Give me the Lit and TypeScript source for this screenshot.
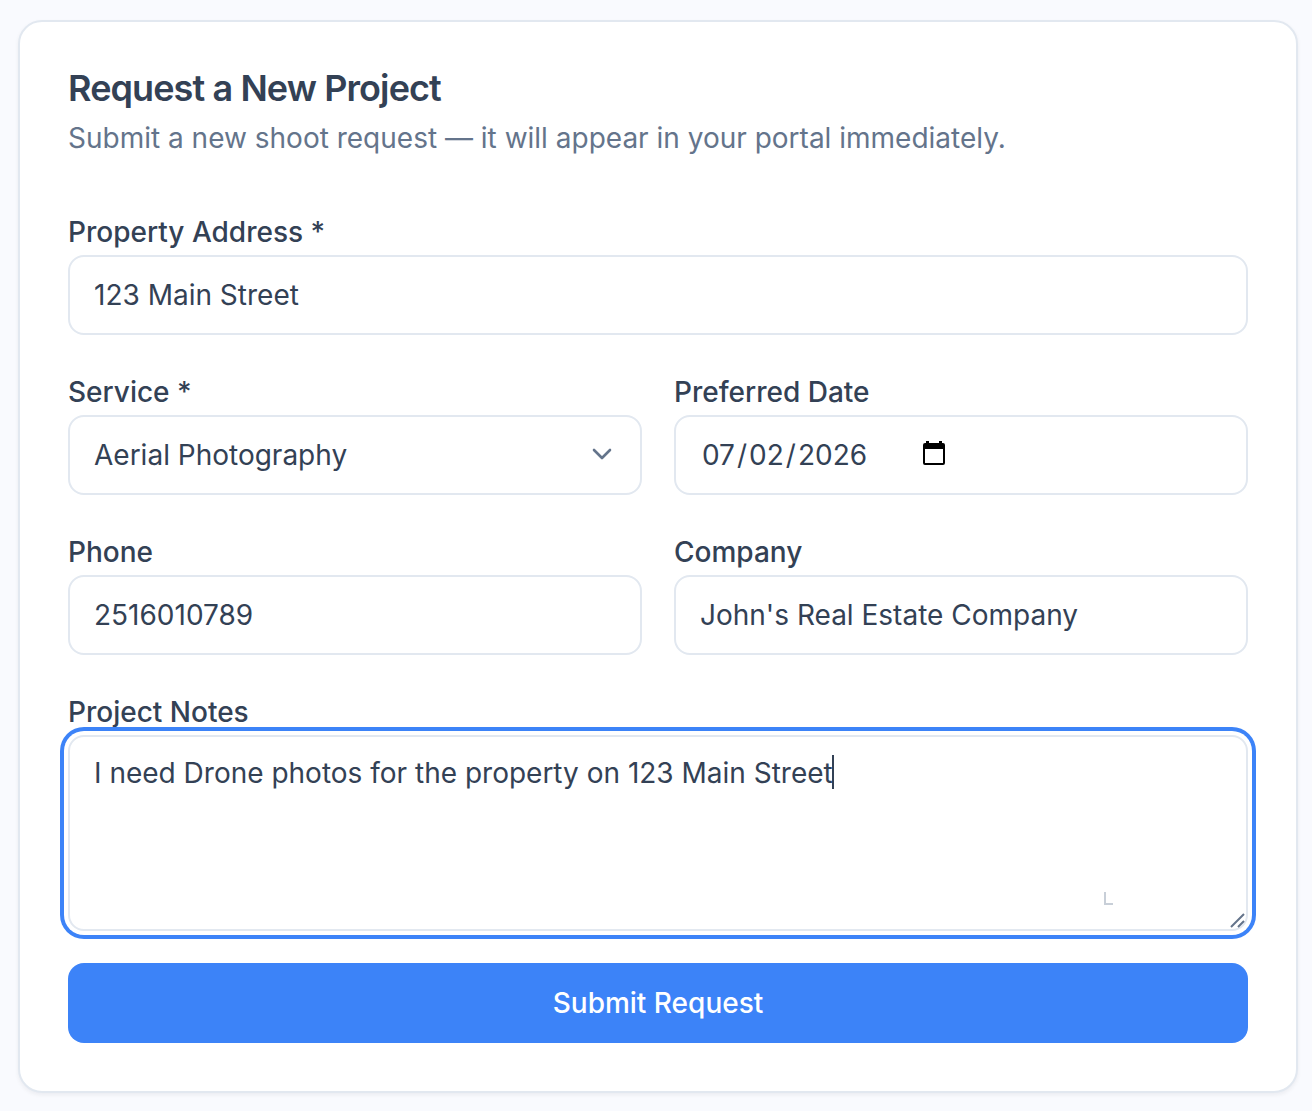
import { LitElement, html, css } from "lit";
import { customElement, state } from "lit/decorators.js";

@customElement("app-root")
export class AppRoot extends LitElement {
  static styles = css`
    :host {
      display: block;
      box-sizing: border-box;
      min-height: 100vh;
      padding: 20px 14px 18px 18px;
      background: #f9fafe;
      color: #334155;
      font-family: Inter, "Liberation Sans", sans-serif;
      font-size: 28px;
      line-height: 40px;
      font-optical-sizing: none;
      -webkit-font-smoothing: antialiased;
    }
    * {
      box-sizing: border-box;
    }
    .card {
      padding: 48px;
      background: #fff;
      border: 2px solid #e2e8f0;
      border-radius: 24px;
      box-shadow: 0 2px 4px rgba(15, 23, 42, 0.06);
    }
    .header {
      display: flex;
      flex-direction: column;
      gap: 12px;
      padding-bottom: 58px;
    }
    .title {
      margin: 0;
      font-size: 36px;
      line-height: 36px;
      font-weight: 600;
      letter-spacing: -0.025em;
    }
    .subtitle {
      margin: 0;
      color: #64748b;
    }
    .form {
      display: flex;
      flex-direction: column;
      gap: 41px;
    }
    .row {
      display: grid;
      grid-template-columns: 1fr 1fr;
      gap: 32px;
    }
    .closing {
      display: flex;
      flex-direction: column;
      gap: 32px;
    }
    .field {
      display: flex;
      flex-direction: column;
      gap: 7px;
      min-width: 0;
    }
    .label {
      align-self: flex-start;
      line-height: 32px;
      font-weight: 500;
    }
    .control {
      display: block;
      width: 100%;
      height: 80px;
      margin: 0;
      padding: 0 24px;
      font: inherit;
      font-optical-sizing: none;
      color: inherit;
      background: #fff;
      border: 2px solid #e2e8f0;
      border-radius: 16px;
      outline: none;
      appearance: none;
    }
    .wrap {
      position: relative;
    }
    .chevron {
      position: absolute;
      right: 24px;
      top: 24px;
      width: 32px;
      height: 32px;
      pointer-events: none;
    }
    .date::-webkit-datetime-edit {
      flex: none;
      padding: 0;
    }
    .date::-webkit-datetime-edit-month-field,
    .date::-webkit-datetime-edit-day-field,
    .date::-webkit-datetime-edit-year-field {
      padding: 0 2px;
    }
    .date::-webkit-calendar-picker-indicator {
      width: 28px;
      height: 28px;
      margin: 0 0 0 9px;
      padding: 0;
      background: url("data:image/svg+xml,%3Csvg xmlns='http://www.w3.org/2000/svg' viewBox='0 0 28 28'%3E%3Cpath fill-rule='evenodd' d='M6 0h3v2h10V0h3v2h1a2 2 0 0 1 2 2v18a2 2 0 0 1-2 2H5a2 2 0 0 1-2-2V4a2 2 0 0 1 2-2h1zM5 8v14h18V8z'/%3E%3C/svg%3E")
        center / 28px 28px no-repeat;
    }
    .notes {
      height: 196px;
      padding: 16px 24px;
      resize: none;
      overflow: hidden;
      caret-color: transparent;
      box-shadow: 0 0 0 4px #fff, 0 0 0 8px #3c83f8;
    }
    .caret {
      position: absolute;
      left: 764px;
      top: 20px;
      width: 2px;
      height: 34px;
      background: #334155;
    }
    .grip {
      position: absolute;
      right: 2px;
      bottom: 2px;
      width: 16px;
      height: 16px;
    }
    .mark {
      position: absolute;
      right: 134px;
      bottom: 26px;
      width: 10px;
      height: 13px;
    }
    .submit {
      display: block;
      width: 100%;
      height: 80px;
      padding: 0 24px;
      border: 0;
      border-radius: 16px;
      background: #3c83f8;
      color: #fff;
      font: inherit;
      font-optical-sizing: none;
      font-weight: 500;
      cursor: pointer;
    }
  `;

  @state() private address = "123 Main Street";
  @state() private phone = "2516010789";
  @state() private company = "John's Real Estate Company";
  @state() private date = "2026-07-02";
  @state() private notes = "I need Drone photos for the property on 123 Main Street";

  render() {
    return html`
      <section class="card">
        <header class="header">
          <h1 class="title">Request a New Project</h1>
          <p class="subtitle">Submit a new shoot request — it will appear in your portal immediately.</p>
        </header>
        <form class="form" @submit=${(e: Event) => e.preventDefault()}>
          <div class="field">
            <label class="label" for="address">Property Address *</label>
            <input class="control" id="address" type="text" required .value=${this.address} />
          </div>
          <div class="row">
            <div class="field">
              <label class="label" for="service">Service *</label>
              <div class="wrap">
                <select class="control" id="service" required>
                  <option selected>Aerial Photography</option>
                </select>
                <svg class="chevron" viewBox="0 0 32 32" fill="none" stroke="#64748b" stroke-width="2.6" stroke-linecap="round" stroke-linejoin="round" aria-hidden="true">
                  <path d="M8 11l8 8 8-8" />
                </svg>
              </div>
            </div>
            <div class="field">
              <label class="label" for="date">Preferred Date</label>
              <input class="control date" id="date" type="date" .value=${this.date} />
            </div>
          </div>
          <div class="row">
            <div class="field">
              <label class="label" for="phone">Phone</label>
              <input class="control" id="phone" type="tel" .value=${this.phone} />
            </div>
            <div class="field">
              <label class="label" for="company">Company</label>
              <input class="control" id="company" type="text" .value=${this.company} />
            </div>
          </div>
          <div class="closing">
            <div class="field">
              <label class="label" for="notes">Project Notes</label>
              <div class="wrap">
                <textarea class="control notes" id="notes" .value=${this.notes}></textarea>
                <span class="caret" aria-hidden="true"></span>
                <svg class="mark" viewBox="0 0 10 13" fill="none" stroke="#c8cfd8" stroke-width="2" aria-hidden="true">
                  <path d="M1 0v12h8" />
                </svg>
                <svg class="grip" viewBox="0 0 16 16" fill="none" stroke="#64748b" stroke-width="2" aria-hidden="true">
                  <path d="M1 14L14 1M8 14l6-6" />
                </svg>
              </div>
            </div>
            <button class="submit" type="submit">Submit Request</button>
          </div>
        </form>
      </section>
    `;
  }
}
